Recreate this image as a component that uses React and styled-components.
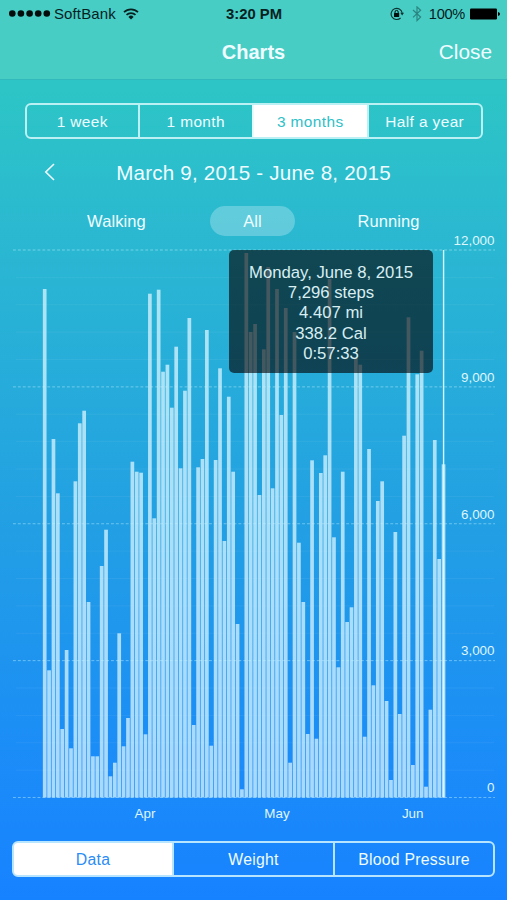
import React, { useState } from "react";
import styled, { createGlobalStyle } from "styled-components";

const GlobalStyle = createGlobalStyle`
  * {
    box-sizing: border-box;
  }

  body {
    margin: 0;
    font-family: "Liberation Sans", Arial, sans-serif;
  }
`;

const Screen = styled.div`
  width: 507px;
  height: 900px;
  display: flex;
  flex-direction: column;
  overflow: hidden;
  color: #effcff;
  background: linear-gradient(
    180deg,
    #2dc5c4 0,
    #2dc5c6 90px,
    #2ab7d2 250px,
    #229fe4 530px,
    #1b8cf8 760px,
    #1782ff 900px
  );
`;

const Header = styled.header`
  height: 80px;
  background: #48cdc5;
  border-bottom: 1px solid #32b9bb;
`;

const StatusBar = styled.div`
  height: 28px;
  padding: 0 7px 0 8px;
  display: grid;
  grid-template-columns: 1fr auto 1fr;
  align-items: center;
  font-size: 15px;
  line-height: 28px;
  color: #06211f;
`;

const StatusGroup = styled.div`
  display: flex;
  align-items: center;
  justify-content: ${(props) => props.$justify || "flex-start"};
  gap: ${(props) => props.$gap || 0}px;
`;

const Carrier = styled.span`
  margin: 0 7px 0 3px;
  letter-spacing: 0.12px;
`;

const Clock = styled.span`
  font-weight: bold;
  font-size: 14.8px;
`;

const Percent = styled.span`
  margin: 0 5px 0 7px;
  font-size: 14.6px;
  letter-spacing: -0.3px;
`;

const NavBar = styled.div`
  height: 48px;
  padding: 0 15px;
  display: grid;
  grid-template-columns: 1fr auto 1fr;
  align-items: center;
`;

const Title = styled.h1`
  grid-column: 2;
  margin: 0;
  font-size: 20px;
  line-height: 48px;
`;

const CloseButton = styled.button`
  justify-self: end;
  padding: 0;
  border: 0;
  background: none;
  color: inherit;
  font: inherit;
  font-size: 20.8px;
  line-height: 48px;
`;

const Segmented = styled.div`
  display: grid;
  grid-template-columns: ${(props) => props.$columns};
  height: 36px;
  margin: ${(props) => props.$margin};
  border: 2px solid rgba(224, 252, 255, 0.8);
  border-radius: 6px;
  flex-shrink: 0;
`;

const Segment = styled.button`
  padding: 2px 0 0;
  border: 0;
  border-left: ${(props) =>
    props.$first ? "0" : "2px solid rgba(224, 252, 255, 0.8)"};
  border-radius: ${(props) => (props.$first ? "3px 0 0 3px" : "0")};
  background: ${(props) => (props.$active ? "#ffffff" : "transparent")};
  color: ${(props) => (props.$active ? props.$tint : "#effcff")};
  font: inherit;
  font-size: ${(props) => props.$size}px;
  letter-spacing: ${(props) => props.$spacing}px;
  line-height: 30px;
`;

const RangeRow = styled.div`
  display: grid;
  grid-template-columns: 20px 1fr 20px;
  align-items: center;
  height: 34px;
  margin: 16px 40px 0;
`;

const RangeText = styled.div`
  padding-top: 2px;
  font-size: 20.6px;
  letter-spacing: 0.2px;
  line-height: 32px;
  text-align: center;
`;

const FilterRow = styled.div`
  display: flex;
  justify-content: center;
  gap: 25px;
  height: 30px;
  margin: 17px 2px 0 0;
`;

const Filter = styled.button`
  width: ${(props) => props.$width}px;
  padding: 0;
  border: 0;
  border-radius: 15px;
  background: ${(props) =>
    props.$active ? "rgba(255, 255, 255, 0.26)" : "transparent"};
  color: inherit;
  font: inherit;
  font-size: 16.5px;
  letter-spacing: 0.1px;
  line-height: 30px;
`;

const ChartArea = styled.div`
  position: relative;
  height: 594px;
  margin-top: -6px;
  flex-shrink: 0;
`;

const Tooltip = styled.div`
  position: absolute;
  left: 229px;
  top: 20px;
  width: 204px;
  height: 123px;
  padding-top: 13px;
  border-radius: 5px;
  background: rgba(0, 0, 0, 0.61);
  color: #d8eef2;
  font-size: 16.7px;
  line-height: 20.2px;
  text-align: center;
`;

const AxisText = styled.text`
  fill: #dff6fc;
  font-size: 13.4px;
`;

const BASE = 567.5;
const TOP = 20;
const MAX_STEPS = 12000;
const PITCH = 4.383;
const FIRST_X = 44.7;

// one entry per day, March 9 to June 8: distance of the bar from the 12,000 line
const BAR_TOPS = [
  39, 420.3, 189, 243.3, 479, 400, 498.3, 231.3, 173.3, 160.7, 352, 506.3,
  506.3, 316, 279.7, 526.3, 512.7, 383.3, 496.3, 468, 211.7, 221.7, 222.7,
  484.3, 43.7, 268.3, 39.7, 121.7, 114.7, 157.7, 96.7, 218.3, 140.7, 68, 475,
  217.3, 209, 80, 495.7, 210, 118.3, 291, 146.7, 221.7, 374, 539.3, 3, 82, 74,
  245, 99.3, 17, 238.3, 39, 165, 58, 512.7, 82, 292.7, 352, 484, 210.3, 488.7,
  223, 205.3, 29, 287.3, 417.3, 221.7, 372, 357.3, 108, 114.7, 486.7, 199,
  435.3, 251, 231.3, 451, 530, 282, 464, 185.7, 67.3, 515, 124.3, 100.7, 536.7,
  459.7, 190, 309, 214.3,
];

const MONTHS = [
  { name: "Apr", x: 145 },
  { name: "May", x: 277 },
  { name: "Jun", x: 412.7 },
];

const PERIODS = ["1 week", "1 month", "3 months", "Half a year"];
const TABS = ["Data", "Weight", "Blood Pressure"];
const FILTERS = [
  { name: "Walking", width: 137 },
  { name: "All", width: 85 },
  { name: "Running", width: 137 },
];

const stepsToY = (steps) => BASE - (steps / MAX_STEPS) * (BASE - TOP);

function SignalDots() {
  return (
    <svg width="43" height="8" viewBox="0 0 43 8">
      {[4.3, 12.9, 21.6, 30.2, 38.8].map((x) => (
        <circle key={x} cx={x} cy="3.5" r="3.3" fill="#020d0c" />
      ))}
    </svg>
  );
}

function WifiIcon() {
  return (
    <svg width="16" height="12" viewBox="0 0 16 12">
      <g fill="none" stroke="#06211f" strokeWidth="1.7">
        <path d="M1 4.2a9.9 9.9 0 0 1 14 0" />
        <path d="M3.5 6.9a6.4 6.4 0 0 1 9 0" />
      </g>
      <path d="M8 11.6 5.4 8.9a3.7 3.7 0 0 1 5.2 0z" fill="#06211f" />
    </svg>
  );
}

function LockIcon() {
  return (
    <svg width="14" height="14" viewBox="0 0 14 14">
      <path
        d="M10.6 11A5.6 5.6 0 1 1 12.2 5.8"
        fill="none"
        stroke="#0b3331"
        strokeWidth="1.1"
      />
      <path d="M10.3 5.8h3.7l-1.8 2.7z" fill="#0b3331" />
      <rect x="4" y="6" width="5.2" height="3.9" rx="0.5" fill="#020d0c" />
      <path
        d="M5 6.4V5a1.6 1.6 0 0 1 3.2 0v1.4"
        fill="none"
        stroke="#020d0c"
        strokeWidth="1"
      />
    </svg>
  );
}

function BluetoothIcon() {
  return (
    <svg width="10" height="16" viewBox="0 0 10 16">
      <path
        d="M1 4 8.6 11.1 5 14.5V0.9L8.6 4.3 1 11.4"
        fill="none"
        stroke="#2b8580"
        strokeWidth="1.2"
      />
    </svg>
  );
}

function BatteryIcon() {
  return (
    <svg width="30" height="13" viewBox="0 0 30 13">
      <rect x="0" y="0.4" width="27" height="11" rx="1.2" fill="#000" />
      <path d="M28 3.9q2 .4 2 2t-2 2z" fill="#000" />
    </svg>
  );
}

function StepsChart() {
  return (
    <svg width="507" height="594" viewBox="0 0 507 594">
      {Array.from({ length: 20 }, (_, i) => i * 600)
        .filter((steps) => steps % 3000 !== 0)
        .map((steps) => (
          <line
            key={steps}
            x1="16"
            x2="494"
            y1={stepsToY(steps)}
            y2={stepsToY(steps)}
            stroke="#ffffff"
            strokeOpacity="0.06"
          />
        ))}
      {BAR_TOPS.map((top, i) => (
        <rect
          key={i}
          x={FIRST_X + i * PITCH - 1.85}
          y={TOP + top}
          width="3.7"
          height={BASE - TOP - top}
          fill="#daf5ff"
          fillOpacity="0.74"
        />
      ))}
      {[0, 3000, 6000, 9000, 12000].map((steps) => (
        <g key={steps}>
          <line
            x1="13"
            x2="495"
            y1={stepsToY(steps)}
            y2={stepsToY(steps)}
            stroke="#c8f4ff"
            strokeOpacity="0.45"
            strokeDasharray="2.9 2"
          />
          <AxisText x="494.5" y={stepsToY(steps) - 5.2} textAnchor="end">
            {steps.toLocaleString("en-US")}
          </AxisText>
        </g>
      ))}
      <line
        x1="443.6"
        x2="443.6"
        y1={TOP}
        y2={BASE}
        stroke="#d8f8ff"
        strokeWidth="1.4"
      />
      {MONTHS.map((month) => (
        <AxisText key={month.name} x={month.x} y="588" textAnchor="middle">
          {month.name}
        </AxisText>
      ))}
    </svg>
  );
}

function App() {
  const [period, setPeriod] = useState("3 months");
  const [filter, setFilter] = useState("All");
  const [tab, setTab] = useState("Data");

  return (
    <Screen>
      <GlobalStyle />
      <Header>
        <StatusBar>
          <StatusGroup>
            <SignalDots />
            <Carrier>SoftBank</Carrier>
            <WifiIcon />
          </StatusGroup>
          <Clock>3:20 PM</Clock>
          <StatusGroup $justify="flex-end">
            <StatusGroup $gap={8}>
              <LockIcon />
              <BluetoothIcon />
            </StatusGroup>
            <Percent>100%</Percent>
            <BatteryIcon />
          </StatusGroup>
        </StatusBar>
        <NavBar>
          <Title>Charts</Title>
          <CloseButton>Close</CloseButton>
        </NavBar>
      </Header>

      <Segmented
        $columns="110.5px 114.5px 114.5px 1fr"
        $margin="23px 24px 0 25px"
      >
        {PERIODS.map((name, i) => (
          <Segment
            key={name}
            $first={i === 0}
            $active={name === period}
            $tint="#2fc0c8"
            $size={15.4}
            $spacing={0.4}
            onClick={() => setPeriod(name)}
          >
            {name}
          </Segment>
        ))}
      </Segmented>

      <RangeRow>
        <svg width="20" height="20" viewBox="0 0 20 20">
          <path
            d="M14 2 5.8 10l8.2 8"
            fill="none"
            stroke="#effcff"
            strokeWidth="1.6"
          />
        </svg>
        <RangeText>March 9, 2015 - June 8, 2015</RangeText>
      </RangeRow>

      <FilterRow>
        {FILTERS.map((item) => (
          <Filter
            key={item.name}
            $width={item.width}
            $active={item.name === filter}
            onClick={() => setFilter(item.name)}
          >
            {item.name}
          </Filter>
        ))}
      </FilterRow>

      <ChartArea>
        <StepsChart />
        <Tooltip>
          <div>Monday, June 8, 2015</div>
          <div>7,296 steps</div>
          <div>4.407 mi</div>
          <div>338.2 Cal</div>
          <div>0:57:33</div>
        </Tooltip>
      </ChartArea>

      <Segmented $columns="158px 161px 1fr" $margin="17px 12px 0">
        {TABS.map((name, i) => (
          <Segment
            key={name}
            $first={i === 0}
            $active={name === tab}
            $tint="#2a8cf5"
            $size={15.8}
            $spacing={0.25}
            onClick={() => setTab(name)}
          >
            {name}
          </Segment>
        ))}
      </Segmented>
    </Screen>
  );
}

export default App;
